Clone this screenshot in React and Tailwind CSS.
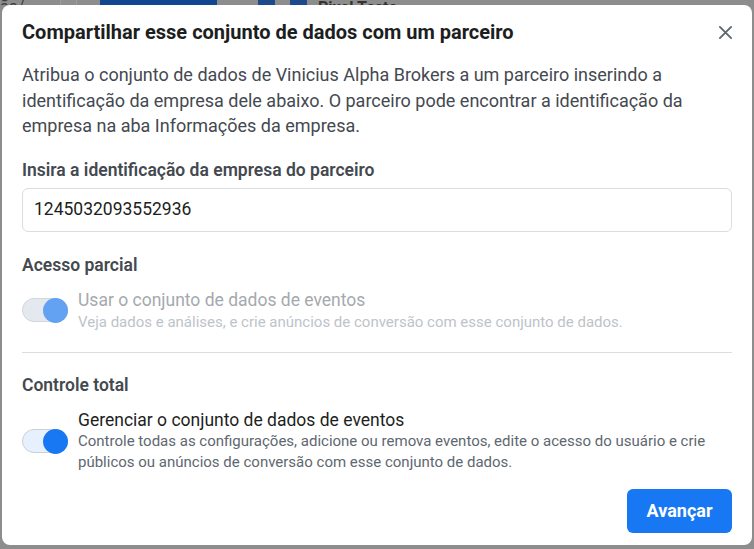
import React from "react";

function Toggle({ disabled }) {
  return (
    <div
      className={`relative shrink-0 w-[46px] h-[24px] rounded-full border ${
        disabled ? "bg-[#e4e9f0] border-[#d3d7dc]" : "bg-[#e7f0fd] border-[#ccd0d5]"
      }`}
    >
      <div
        className={`absolute -right-px -top-px w-[25px] h-[25px] rounded-full ${
          disabled ? "bg-[#63a1f3]" : "bg-[#1877f2]"
        }`}
      />
    </div>
  );
}

export default function App() {
  return (
    <div
      className="relative w-[754px] h-[549px] overflow-hidden bg-[#8d8d8d]"
      style={{ fontFamily: "Roboto, 'Noto Sans', sans-serif" }}
    >
      {/* dimmed page behind the dialog */}
      <div className="flex items-end h-[5px] overflow-hidden text-[16px] leading-[20px]">
        <span className="w-[60px] -mb-[12px] text-[#3d3d3d]">ão/</span>
        <span className="w-[17px] h-[20px] border-x border-[#9b9b9b] bg-[#8f8f8f]" />
        <span className="ml-[23px] w-[117px] h-[20px] bg-[#124690] -mb-[2px] flex justify-center text-[#bcc6d6] font-bold">
          <span className="-mt-[6px]">Adicionar</span>
        </span>
        <span className="ml-[41px] w-[17px] h-[20px] bg-[#1c4a8b]" />
        <span className="ml-[15px] w-[17px] h-[20px] bg-[#1c4a8b]" />
        <span className="ml-[11px] -mb-[13px] font-bold text-[#333]">Pixel Teste</span>
      </div>

      <div className="absolute left-[2px] top-[5px] w-[750px] h-[540px] bg-white rounded-[8px] flex flex-col">
        <div className="h-[54px] shrink-0 flex items-center justify-between pl-5 pr-[15px]">
          <h1 className="text-[20px] font-bold text-[#1c1e21] leading-[24px]">
            Compartilhar esse conjunto de dados com um parceiro
          </h1>
          <button className="w-[24px] h-[24px] flex items-center justify-center text-[#606770]">
            <svg width="15" height="15" viewBox="0 0 16 16" fill="none" stroke="currentColor" strokeWidth="2" strokeLinecap="round">
              <path d="M2 2 L14 14 M14 2 L2 14" />
            </svg>
          </button>
        </div>

        <div className="px-5 flex flex-col">
          <p className="mt-[3px] text-[18px] leading-[25.5px] text-[#444950]">
            Atribua o conjunto de dados de Vinicius Alpha Brokers a um parceiro inserindo a
            identificação da empresa dele abaixo. O parceiro pode encontrar a identificação da
            empresa na aba Informações da empresa.
          </p>

          <label className="mt-[21px] text-[17.5px] leading-[20px] font-semibold text-[#444950]">
            Insira a identificação da empresa do parceiro
          </label>
          <div className="mt-[8px] h-[44px] rounded-[6px] border border-[#dadde1] flex items-center px-[11px] text-[17.5px] text-[#1c1e21]">
            1245032093552936
          </div>

          <div className="mt-[23px] text-[17.5px] leading-[20px] font-semibold text-[#444950]">
            Acesso parcial
          </div>
          <div className="mt-[15px] flex items-center gap-[10px]">
            <Toggle disabled />
            <div className="flex flex-col">
              <span className="text-[17.5px] leading-[20px] text-[#a5a9ae]">
                Usar o conjunto de dados de eventos
              </span>
              <span className="mt-[3px] text-[15px] leading-[18px] text-[#bec3c9]">
                Veja dados e análises, e crie anúncios de conversão com esse conjunto de dados.
              </span>
            </div>
          </div>

          <div className="mt-[21px] h-px bg-[#dadde1]" />

          <div className="mt-[22px] text-[17.5px] leading-[20px] font-semibold text-[#444950]">
            Controle total
          </div>
          <div className="mt-[15px] flex items-center gap-[10px]">
            <Toggle />
            <div className="flex flex-col">
              <span className="text-[17.5px] leading-[20px] text-[#1c1e21]">
                Gerenciar o conjunto de dados de eventos
              </span>
              <span className="mt-[1px] text-[15px] leading-[21px] text-[#606770]">
                Controle todas as configurações, adicione ou remova eventos, edite o acesso do usuário e crie
                públicos ou anúncios de conversão com esse conjunto de dados.
              </span>
            </div>
          </div>

          <div className="mt-[16px] flex justify-end">
            <button className="w-[105px] h-[44px] rounded-[6px] bg-[#1877f2] text-white text-[18px] font-bold">
              Avançar
            </button>
          </div>
        </div>
      </div>
    </div>
  );
}
